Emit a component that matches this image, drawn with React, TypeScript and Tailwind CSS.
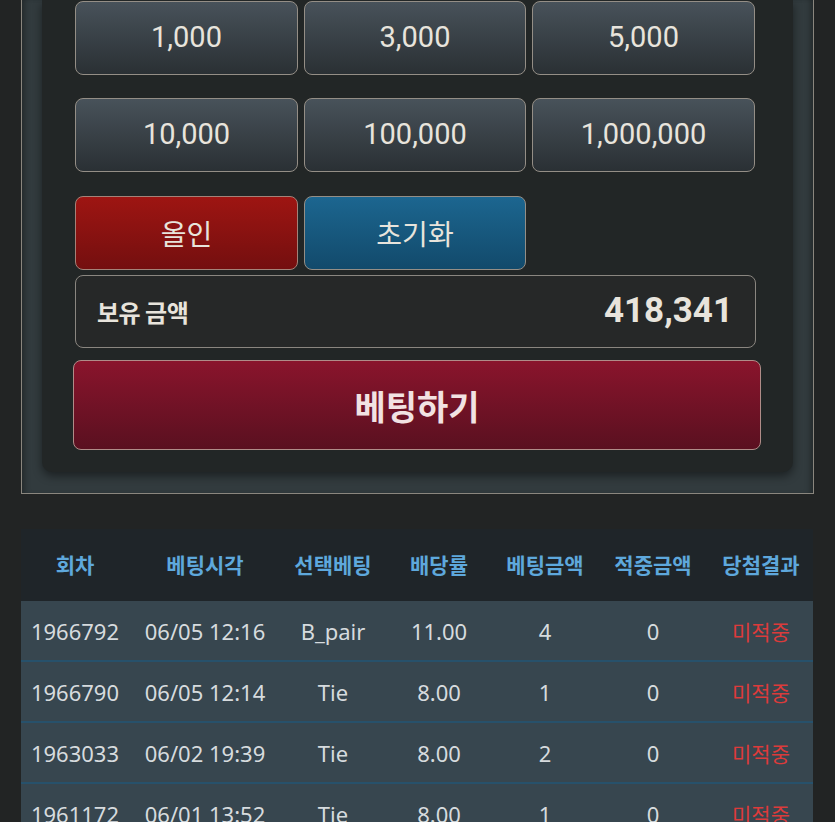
import React from "react";

const amounts = ["1,000", "3,000", "5,000", "10,000", "100,000", "1,000,000"];

const rows = [
  ["1966792", "06/05 12:16", "B_pair", "11.00", "4", "0", "미적중"],
  ["1966790", "06/05 12:14", "Tie", "8.00", "1", "0", "미적중"],
  ["1963033", "06/02 19:39", "Tie", "8.00", "2", "0", "미적중"],
  ["1961172", "06/01 13:52", "Tie", "8.00", "1", "0", "미적중"],
];

const headers = ["회차", "베팅시각", "선택베팅", "배당률", "베팅금액", "적중금액", "당첨결과"];

const btnBase =
  "h-[74px] rounded-[8px] border border-[#948e86] flex items-center justify-center text-[#e8e4dc]";
const grayBtn = "bg-gradient-to-b from-[#48525a] to-[#2a3034]";

export default function App() {
  return (
    <div
      className="min-h-[822px] w-[835px] bg-[#222424] overflow-hidden"
      style={{ fontFamily: "Roboto, 'Noto Sans CJK KR', sans-serif" }}
    >
      <div className="ml-[21px] w-[793px] border-x border-b border-[#8a867e] bg-[#323b3e] px-[20px] pb-[21px] shadow-[inset_6px_0_6px_-4px_rgba(0,0,0,0.35),inset_-6px_0_6px_-4px_rgba(0,0,0,0.35)]">
        <div className="w-[751px] rounded-b-[10px] bg-[#222626] pt-[1px] pb-[22px] shadow-[0_4px_10px_rgba(0,0,0,0.45)]">
          <div className="ml-[33px] w-[680px]">
            <div className="grid grid-cols-[223px_222px_223px] gap-x-[6px]">
              {amounts.slice(0, 3).map((a) => (
                <div key={a} className={`${btnBase} ${grayBtn} text-[29px]`}>
                  {a}
                </div>
              ))}
            </div>
            <div className="mt-[23px] grid grid-cols-[223px_222px_223px] gap-x-[6px]">
              {amounts.slice(3).map((a) => (
                <div key={a} className={`${btnBase} ${grayBtn} text-[29px]`}>
                  {a}
                </div>
              ))}
            </div>
            <div className="mt-[24px] grid grid-cols-[223px_222px_223px] gap-x-[6px]">
              <div
                className={`${btnBase} bg-gradient-to-b from-[#9e1512] to-[#740f0f] border-[#a48278] text-[28px]`}
                style={{ fontFamily: "'Noto Sans CJK KR', sans-serif" }}
              >
                올인
              </div>
              <div
                className={`${btnBase} bg-gradient-to-b from-[#1c6690] to-[#124a6b] border-[#7d8e98] text-[28px]`}
                style={{ fontFamily: "'Noto Sans CJK KR', sans-serif" }}
              >
                초기화
              </div>
            </div>
            <div className="mt-[5px] flex h-[73px] w-[681px] items-center justify-between rounded-[8px] border border-[#8a8680] bg-[#262828] pl-[21px] pr-[22px] text-[#e8e4dc]">
              <span
                className="text-[24px] font-bold tracking-[-0.5px]"
                style={{ fontFamily: "'Noto Sans CJK KR', sans-serif" }}
              >
                보유 금액
              </span>
              <span className="text-[35px] font-bold">418,341</span>
            </div>
          </div>
          <div
            className="ml-[31px] mt-[12px] flex h-[90px] w-[688px] items-center justify-center rounded-[8px] border border-[#b08c88] bg-gradient-to-b from-[#8a142c] to-[#5a1020] text-[34px] font-bold text-[#f2e2e2]"
            style={{ fontFamily: "'Noto Sans CJK KR', sans-serif" }}
          >
            베팅하기
          </div>
        </div>
      </div>

      <div
        className="ml-[21px] mt-[35px] w-[792px]"
        style={{ fontFamily: "'Noto Sans', 'Noto Sans CJK KR', sans-serif" }}
      >
        <div className="grid h-[72px] grid-cols-[108px_152px_104px_108px_104px_112px_104px] items-center bg-[#1f2529]">
          {headers.map((h) => (
            <div
              key={h}
              className="text-center text-[21px] font-bold text-[#5ea8dc]"
              style={{ fontFamily: "'Noto Sans CJK KR', sans-serif" }}
            >
              {h}
            </div>
          ))}
        </div>
        {rows.map((r, i) => (
          <div
            key={i}
            className="grid h-[61px] grid-cols-[108px_152px_104px_108px_104px_112px_104px] items-center border-b-2 border-[#27516b] bg-[#37464f] pt-[2px] text-[22px] text-[#d6dbde]"
          >
            {r.map((c, j) => (
              <div
                key={j}
                className={
                  j === 6
                    ? "text-center text-[21px] text-[#dc3b3b]"
                    : "text-center whitespace-nowrap"
                }
                style={j === 6 ? { fontFamily: "'Noto Sans CJK KR', sans-serif" } : undefined}
              >
                {c}
              </div>
            ))}
          </div>
        ))}
      </div>
    </div>
  );
}
